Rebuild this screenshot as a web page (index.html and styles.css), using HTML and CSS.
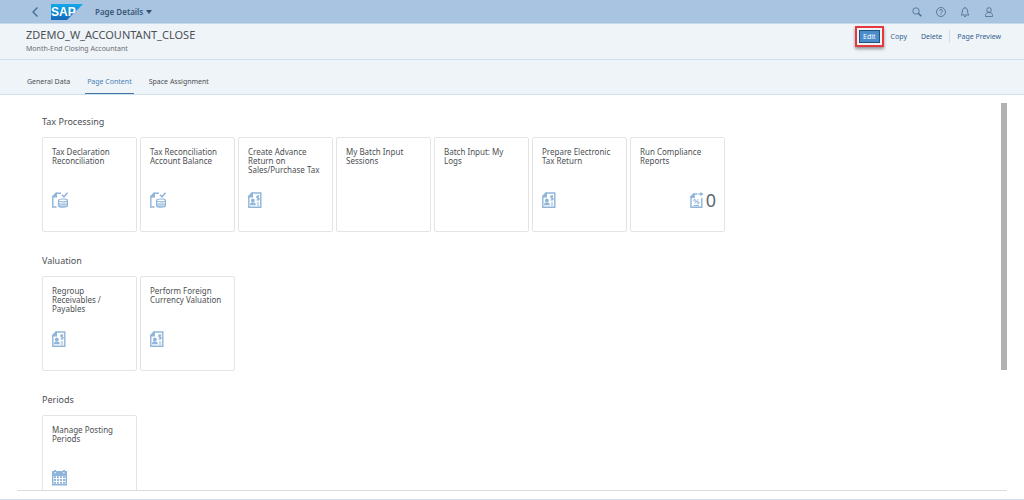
FILE: index.html
```html
<!DOCTYPE html>
<html lang="en">
<head>
  <meta charset="UTF-8">
  <meta name="viewport" content="width=device-width, initial-scale=1.0">
  <title>Page Details</title>
  <link rel="stylesheet" href="styles.css">
</head>
<body>
  <!-- Icon definitions -->
  <svg class="sprite" aria-hidden="true">
    <symbol id="icon-doc-data" viewBox="0 0 16 16">
      <path d="M4 1.200H9M.8 4v11H4.500" fill="none" stroke="currentColor" stroke-width="1.400"/>
      <path d="M.1 5.500V4.300l3.600-3.800h1.300v5z"/>
      <path d="M10 2.800l2 2L15.500 .7" fill="none" stroke="currentColor" stroke-width="1.500"/>
      <path d="M6.500 8.500v5c0 2.300 9 2.300 9 0v-5" fill="none" stroke="currentColor" stroke-width="1.200"/>
      <ellipse cx="11" cy="8.400" rx="4.500" ry="1.400" fill="none" stroke="currentColor" stroke-width="1.200"/>
      <path d="M6.500 10.700c0 2 9 2 9 0M6.500 12.700c0 2 9 2 9 0" fill="none" stroke="currentColor" stroke-width="1.200"/>
    </symbol>
    <symbol id="icon-doc-person" viewBox="0 0 16 16">
      <path d="M4 1H12.800v14.200H.8V4.500z" fill="none" stroke="currentColor" stroke-width="1.400"/>
      <path d="M.1 5.500V4.300L3.700.5h1.300v5z"/>
      <circle cx="4.800" cy="8.500" r="1.900"/>
      <path d="M2 13.300c0-3 1.500-2.900 2.800-2.900s3 0 3 2.900z"/>
      <path d="M11.300 4.200c-3.200-1.200-3.200 1.500-1.500 1.700 2.200.3 1.700 2.900-1.200 1.800M10 2.900v5.900M8.800 11h2.400M8.800 13h2.400" fill="none" stroke="currentColor" stroke-width="1.100"/>
    </symbol>
    <symbol id="icon-doc-percent" viewBox="0 0 16 16">
      <path d="M8.500 2H5L2 5v10.300h10.800V6" fill="none" stroke="currentColor" stroke-width="1.400"/>
      <path d="M1.300 6V4.500l3.200-3.200h1.300V6z"/>
      <path d="M9.500 2H13" fill="none" stroke="currentColor" stroke-width="1.500"/>
      <path d="M11.500 0l3 2-3 2.300z"/>
      <path d="M9.300 7.300l-3.600 4.200M4.500 13.500h5.500" fill="none" stroke="currentColor"/>
      <circle cx="5.600" cy="8.300" r="1" fill="none" stroke="currentColor"/>
      <circle cx="9.200" cy="10.700" r="1" fill="none" stroke="currentColor"/>
    </symbol>
    <symbol id="icon-calendar" viewBox="0 0 16 16">
      <path d="M0 1H2V0H4v1h7V0h2v1h2V15.500H0z"/>
      <path d="M1.500 6h12v8h-12z" fill="#fff"/>
      <path d="M2 7.200h11M2 10h11M2 12.800h11" stroke="currentColor" stroke-width="1.800" stroke-dasharray="2 1"/>
      <path d="M2.500 2.800H4M11 2.800h1.500" stroke="#fff"/>
    </symbol>
  </svg>

  <header class="shell">
    <button class="shell-btn" aria-label="Back">
      <svg width="10" height="10" viewBox="0 0 10 10"><path d="M7.500 .5L3 5l4.500 4.500" class="thick"/></svg>
    </button>
    <svg class="logo" width="32" height="16" viewBox="0 0 32 16" role="img" aria-label="SAP">
      <defs>
        <linearGradient id="logoFill" x1="0" y1="0" x2="0" y2="1">
          <stop offset="0" stop-color="#12a9ea"/>
          <stop offset="1" stop-color="#1568ba"/>
        </linearGradient>
      </defs>
      <path d="M0 0h32L16 16H0z" fill="url(#logoFill)"/>
      <text x="0" y="12">SAP</text>
    </svg>
    <button class="shell-title">Page Details <span class="arrow"></span></button>
    <div class="shell-tools">
      <button class="shell-btn" aria-label="Search">
        <svg width="10" height="10" viewBox="0 0 10 10"><circle cx="4" cy="4" r="3.200"/><path d="M6.300 6.300l3 3" class="thick"/></svg>
      </button>
      <button class="shell-btn" aria-label="Help">
        <svg width="10" height="10" viewBox="0 0 10 10"><circle cx="5" cy="5" r="4.500"/><path d="M3.600 3.900c0-1.900 2.900-1.800 2.900 0C6.500 5 5 5 5 6.300M5 7v.9"/></svg>
      </button>
      <button class="shell-btn" aria-label="Notifications">
        <svg width="10" height="10" viewBox="0 0 10 10"><path d="M1 8c1.300-1 1.200-2 1.400-4C2.600 1.800 3.500 1 5 1s2.400.8 2.600 3c.2 2 .1 3 1.400 4zM4 9.400h2M5 0v1"/></svg>
      </button>
      <button class="shell-btn" aria-label="User">
        <svg width="10" height="10" viewBox="0 0 10 10"><circle cx="5" cy="3" r="2.300"/><path d="M1.500 9.500c0-3.500 1-3.500 2.500-4h2c1.500.5 2.500.5 2.500 4z"/></svg>
      </button>
    </div>
  </header>

  <div class="page-header">
    <div class="page-titles">
      <h1>ZDEMO_W_ACCOUNTANT_CLOSE</h1>
      <p>Month-End Closing Accountant</p>
    </div>
    <div class="actions">
      <div class="highlight"><button class="btn btn-primary">Edit</button></div>
      <button class="btn">Copy</button>
      <button class="btn">Delete</button>
      <span class="separator"></span>
      <button class="btn">Page Preview</button>
    </div>
  </div>

  <nav class="tabs">
    <a href="#general">General Data</a>
    <a href="#content" class="active">Page Content</a>
    <a href="#spaces">Space Assignment</a>
  </nav>

  <main class="content">
    <div class="sections">
      <section>
        <h2>Tax Processing</h2>
        <div class="tiles">
          <a class="tile" href="#"><h3>Tax Declaration Reconciliation</h3><svg class="icon"><use href="#icon-doc-data"/></svg></a>
          <a class="tile" href="#"><h3>Tax Reconciliation Account Balance</h3><svg class="icon"><use href="#icon-doc-data"/></svg></a>
          <a class="tile" href="#"><h3>Create Advance Return on Sales/Purchase Tax</h3><svg class="icon"><use href="#icon-doc-person"/></svg></a>
          <a class="tile" href="#"><h3>My Batch Input Sessions</h3></a>
          <a class="tile" href="#"><h3>Batch Input: My Logs</h3></a>
          <a class="tile" href="#"><h3>Prepare Electronic Tax Return</h3><svg class="icon"><use href="#icon-doc-person"/></svg></a>
          <a class="tile" href="#"><h3>Run Compliance Reports</h3><div class="kpi"><svg class="icon"><use href="#icon-doc-percent"/></svg><span>0</span></div></a>
        </div>
      </section>
      <section>
        <h2>Valuation</h2>
        <div class="tiles">
          <a class="tile" href="#"><h3>Regroup Receivables / Payables</h3><svg class="icon"><use href="#icon-doc-person"/></svg></a>
          <a class="tile" href="#"><h3>Perform Foreign Currency Valuation</h3><svg class="icon"><use href="#icon-doc-person"/></svg></a>
        </div>
      </section>
      <section>
        <h2>Periods</h2>
        <div class="tiles">
          <a class="tile" href="#"><h3>Manage Posting Periods</h3><svg class="icon"><use href="#icon-calendar"/></svg></a>
        </div>
      </section>
    </div>
    <div class="scrollbar"><div class="thumb"></div></div>
  </main>
  <footer class="footer"></footer>
</body>
</html>
```
FILE: styles.css
```css
* {
  box-sizing: border-box;
}
body {
  margin: 0;
  height: 100vh;
  display: flex;
  flex-direction: column;
  overflow: hidden;
  font-family: "Noto Sans", "Open Sans", sans-serif;
  font-size: 8px;
  color: #4c5054;
  background: #fff;
}
h1, h2, h3, p {
  margin: 0;
  font-weight: 400;
}
button {
  font: inherit;
  color: inherit;
  border: none;
  background: none;
  padding: 0;
  cursor: pointer;
}
a {
  color: inherit;
  text-decoration: none;
}
.sprite {
  display: none;
}

/* Shell bar */
.shell {
  display: flex;
  align-items: center;
  flex: none;
  height: 24px;
  padding: 0 30px;
  background: #a9c4e0;
  border-bottom: 1px solid #c6daee;
  color: #3a5878;
}
.shell-btn {
  display: flex;
  width: 10px;
  height: 10px;
}
.shell-btn svg {
  fill: none;
  stroke: #46688c;
  stroke-width: 0.8;
}
.shell-btn .thick {
  stroke-width: 1.3;
}
.logo {
  margin: 0 12px 0 11px;
}
.logo text {
  font-family: "Liberation Sans", Arial, sans-serif;
  font-size: 12px;
  font-weight: 700;
  fill: #fff;
}
.shell-title {
  display: flex;
  align-items: center;
  gap: 3px;
  font-size: 8px;
  font-weight: 600;
}
.arrow {
  border: 3px solid transparent;
  border-top: 4px solid #32516f;
  border-bottom: 0;
}
.shell-tools {
  display: flex;
  gap: 14px;
  margin-left: auto;
}

/* Page header */
.page-header {
  display: flex;
  justify-content: space-between;
  flex: none;
  height: 36px;
  padding: 0 16px 0 26px;
  background: #eff4f9;
  border-bottom: 1px solid #cfdfee;
}
.page-titles {
  padding-top: 3px;
}
h1 {
  font-size: 11px;
  line-height: 16px;
}
.page-titles p {
  color: #6a6d70;
  font-size: 7px;
  line-height: 12px;
}
.actions {
  display: flex;
  align-items: center;
  height: 25px;
  color: #35618e;
  font-size: 7px;
}
.btn {
  height: 13px;
  padding: 0 7px;
  line-height: 13px;
}
.highlight {
  display: flex;
  border: 2px solid #e5393d;
  padding: 2px;
  box-shadow: 0 2px 3px rgba(0, 0, 0, 0.4);
}
.btn-primary {
  padding: 0 3px;
  line-height: 11px;
  background: #4a8dca;
  border: 1px solid #23527c;
  color: #fff;
}
.separator {
  height: 13px;
  border-left: 1px solid #d3dde6;
}

/* Tabs */
.tabs {
  display: flex;
  gap: 13px;
  flex: none;
  height: 35px;
  padding: 0 25px;
  background: #eff4f9;
  border-bottom: 1px solid #cfe0ef;
  font-size: 7px;
}
.tabs a {
  padding: 0 2px;
  line-height: 43px;
}
.tabs .active {
  color: #4a80b4;
  border-bottom: 1px solid #4674a3;
}

/* Tiles */
.content {
  display: flex;
  flex: 1;
  min-height: 0;
  margin: 0 17px;
  border-bottom: 1px solid #dcdcdc;
}
.sections {
  flex: 1;
  overflow: hidden;
  padding: 19px 25px 0;
}
section {
  margin-bottom: 21px;
}
h2 {
  font-size: 9px;
  line-height: 16px;
  margin-bottom: 7px;
}
.tiles {
  display: flex;
  flex-wrap: wrap;
  gap: 3px;
}
.tile {
  display: flex;
  flex-direction: column;
  justify-content: space-between;
  width: 95px;
  height: 95px;
  padding: 9px 8px 23px 9px;
  border: 1px solid #e4e4e4;
  border-radius: 2px;
}
h3 {
  font-size: 8px;
  line-height: 9px;
}
.icon {
  width: 16px;
  height: 16px;
  color: #8fb5da;
  fill: currentColor;
}
.kpi {
  display: flex;
  align-items: center;
  justify-content: flex-end;
  gap: 1px;
  height: 16px;
}
.kpi span {
  font-size: 18px;
  line-height: 16px;
  color: #5c686f;
}

/* Scrollbar and page bottom */
.scrollbar {
  width: 6px;
  padding-top: 8px;
}
.thumb {
  height: 69%;
  background: #b1b1b1;
}
.footer {
  flex: none;
  height: 9px;
  border-bottom: 1px solid #d3dfef;
}
```
